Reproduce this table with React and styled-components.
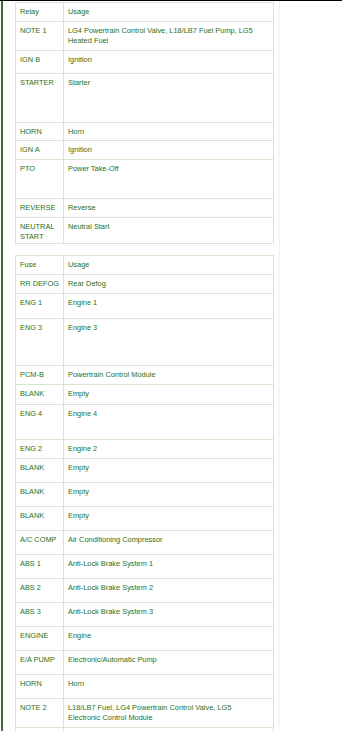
import React from 'react'
import styled, { createGlobalStyle } from 'styled-components'

const relays = [
  { name: 'Relay', usage: 'Usage', h: 19 },
  { name: 'NOTE 1', usage: 'LG4 Powertrain Control Valve, L18/LB7 Fuel Pump, LG5 Heated Fuel', h: 29 },
  { name: 'IGN B', usage: 'Ignition', h: 23 },
  { name: 'STARTER', usage: 'Starter', h: 49 },
  { name: 'HORN', usage: 'Horn', h: 18 },
  { name: 'IGN A', usage: 'Ignition', h: 19 },
  { name: 'PTO', usage: 'Power Take-Off', h: 39 },
  { name: 'REVERSE', usage: 'Reverse', h: 19 },
  { name: 'NEUTRAL START', usage: 'Neutral Start', h: 26 },
]

const fuses = [
  { name: 'Fuse', usage: 'Usage', h: 19 },
  { name: 'RR DEFOG', usage: 'Rear Defog', h: 19 },
  { name: 'ENG 1', usage: 'Engine 1', h: 25 },
  { name: 'ENG 3', usage: 'Engine 3', h: 47 },
  { name: 'PCM-B', usage: 'Powertrain Control Module', h: 19 },
  { name: 'BLANK', usage: 'Empty', h: 20 },
  { name: 'ENG 4', usage: 'Engine 4', h: 35 },
  { name: 'ENG 2', usage: 'Engine 2', h: 19 },
  { name: 'BLANK', usage: 'Empty', h: 24 },
  { name: 'BLANK', usage: 'Empty', h: 24 },
  { name: 'BLANK', usage: 'Empty', h: 24 },
  { name: 'A/C COMP', usage: 'Air Conditioning Compressor', h: 24 },
  { name: 'ABS 1', usage: 'Anti-Lock Brake System 1', h: 24 },
  { name: 'ABS 2', usage: 'Anti-Lock Brake System 2', h: 24 },
  { name: 'ABS 3', usage: 'Anti-Lock Brake System 3', h: 24 },
  { name: 'ENGINE', usage: 'Engine', h: 24 },
  { name: 'E/A PUMP', usage: 'Electronic/Automatic Pump', h: 24 },
  { name: 'HORN', usage: 'Horn', h: 24 },
  { name: 'NOTE 2', usage: 'L18/LB7 Fuel, LG4 Powertrain Control Valve, LG5 Electronic Control Module', h: 29 },
  { name: '', usage: '', h: 24 },
]

function FuseTable({ rows }) {
  return (
    <Table>
      {rows.map((r, i) => (
        <Row key={i} $h={r.h}>
          <NameCell>{r.name}</NameCell>
          <UsageCell>{r.usage}</UsageCell>
        </Row>
      ))}
    </Table>
  )
}

export default function App() {
  return (
    <>
      <Global />
      <Page>
        <Content>
          <FuseTable rows={relays} />
          <FuseTable rows={fuses} />
        </Content>
      </Page>
    </>
  )
}

const Global = createGlobalStyle`
  html, body {
    margin: 0;
    padding: 0;
    background: #fff;
  }
  body {
    overflow: hidden;
  }
`

const Page = styled.div`
  min-height: 100vh;
  border-top: 1px solid #000;
  box-sizing: border-box;
  display: flex;
  padding-left: 1px;
`

const Content = styled.div`
  width: 279px;
  border-left: 2px solid #3d6b34;
  border-right: 1px solid #eef5ec;
  box-sizing: border-box;
  padding: 1px 0 0 12px;
  display: flex;
  flex-direction: column;
  gap: 11px;
`

const Table = styled.div`
  width: 259px;
  border: 1px solid #d5e7cf;
  border-bottom: none;
  box-sizing: border-box;
  font-family: "Liberation Sans", Arial, sans-serif;
  font-size: 7.4px;
  line-height: 10px;
  color: #2a7020;
`

const Row = styled.div`
  display: grid;
  grid-template-columns: 48px 1fr;
  height: ${p => p.$h}px;
  box-sizing: border-box;
  border-bottom: 1px solid #d5e7cf;
`

const NameCell = styled.div`
  padding: 4px 4px 0 4px;
  border-right: 1px solid #d5e7cf;
`

const UsageCell = styled.div`
  padding: 4px 16px 0 4px;
`
